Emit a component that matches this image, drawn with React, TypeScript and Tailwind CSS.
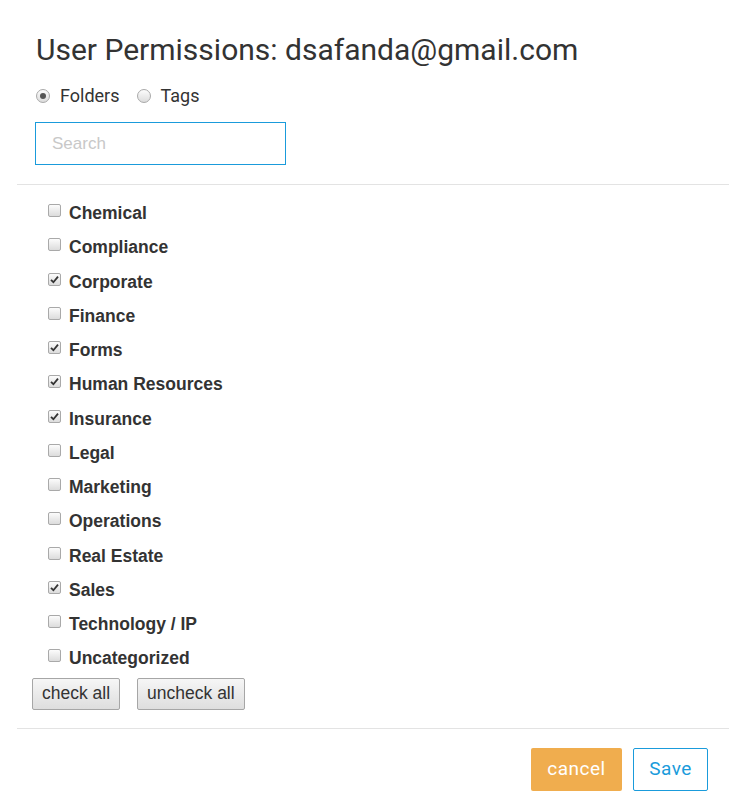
import { useState } from "react";

const folders = [
    { name: "Chemical", checked: false },
    { name: "Compliance", checked: false },
    { name: "Corporate", checked: true },
    { name: "Finance", checked: false },
    { name: "Forms", checked: true },
    { name: "Human Resources", checked: true },
    { name: "Insurance", checked: true },
    { name: "Legal", checked: false },
    { name: "Marketing", checked: false },
    { name: "Operations", checked: false },
    { name: "Real Estate", checked: false },
    { name: "Sales", checked: true },
    { name: "Technology / IP", checked: false },
    { name: "Uncategorized", checked: false },
];

const CheckBox = ({ checked }: { checked: boolean }) => (
    <span className="w-[13px] h-[13px] rounded-[2px] border border-solid border-[color:#a9a9a9] bg-gradient-to-b from-[#fcfcfc] to-[#dcdcdc] flex items-center justify-center shrink-0">
        {checked && (
            <svg width="9" height="9" viewBox="0 0 9 9">
                <path d="M1 4.8 L3.4 7.2 L8 1.6" fill="none" stroke="#333" strokeWidth="1.8" />
            </svg>
        )}
    </span>
);

const Radio = ({ on }: { on: boolean }) => (
    <span className="w-[14px] h-[14px] rounded-full border border-solid border-[color:#a9a9a9] bg-gradient-to-b from-[#fcfcfc] to-[#dcdcdc] flex items-center justify-center shrink-0">
        {on && <span className="w-[6px] h-[6px] rounded-full bg-[#555]" />}
    </span>
);

export default function App() {
    const [items, setItems] = useState(folders);
    const [mode, setMode] = useState<"folders" | "tags">("folders");

    const setAll = (value: boolean) => setItems(items.map(i => ({ ...i, checked: value })));

    return (
        <div className="w-[746px] h-[806px] bg-white text-[#333] font-['Roboto',sans-serif]">
            <div className="px-[36px] pt-[32px]">
                <h1 className="text-[30px] leading-[36px] text-[#333]">User Permissions: dsafanda@gmail.com</h1>
                <div className="flex items-center mt-[16px] text-[18px] leading-[24px]">
                    <button className="flex items-center gap-[10px]" onClick={() => setMode("folders")}>
                        <Radio on={mode === "folders"} />
                        <span>Folders</span>
                    </button>
                    <button className="flex items-center gap-[10px] ml-[17px]" onClick={() => setMode("tags")}>
                        <Radio on={mode === "tags"} />
                        <span>Tags</span>
                    </button>
                </div>
                <input
                    placeholder="Search"
                    className="block mt-[14px] -ml-[1px] w-[251px] h-[43px] border border-solid border-[color:#1a9bdb] px-[16px] text-[17px] font-['Liberation_Sans',sans-serif] placeholder:text-[#c8c8c8] outline-none"
                />
            </div>

            <div className="mx-[17px] mt-[19px] h-[1px] bg-[#e3e3e3]" />

            <div className="pl-[48px] pt-[11px] font-['Liberation_Sans',Arial,sans-serif]">
                {items.map((item, idx) => (
                    <label
                        key={item.name}
                        className="flex items-center gap-[8px] h-[34.25px] cursor-pointer"
                        onClick={() => setItems(items.map((i, j) => j === idx ? { ...i, checked: !i.checked } : i))}
                    >
                        <span className="-mt-[5px]"><CheckBox checked={item.checked} /></span>
                        <span className="text-[17.5px] font-bold text-[#333]">{item.name}</span>
                    </label>
                ))}
            </div>

            <div className="flex gap-[17px] pl-[32px] mt-[2px] font-['Liberation_Sans',Arial,sans-serif]">
                <button onClick={() => setAll(true)} className="h-[32px] px-[9px] border border-solid border-[color:#a6a6a6] rounded-[2px] bg-gradient-to-b from-[#f6f6f6] to-[#dedede] text-[17.5px] text-[#333]">check all</button>
                <button onClick={() => setAll(false)} className="h-[32px] px-[9px] border border-solid border-[color:#a6a6a6] rounded-[2px] bg-gradient-to-b from-[#f6f6f6] to-[#dedede] text-[17.5px] text-[#333]">uncheck all</button>
            </div>

            <div className="mx-[17px] mt-[18px] h-[1px] bg-[#e3e3e3]" />

            <div className="flex justify-end gap-[11px] pr-[38px] mt-[19px]">
                <button className="w-[91px] h-[43px] rounded-[2px] bg-[#f0ad4e] text-white text-[19px] tracking-[0.5px]">cancel</button>
                <button className="w-[75px] h-[43px] rounded-[2px] border border-solid border-[color:#1a9bdb] bg-white text-[#1a9bdb] text-[19px] tracking-[0.5px]">Save</button>
            </div>
        </div>
    );
}
